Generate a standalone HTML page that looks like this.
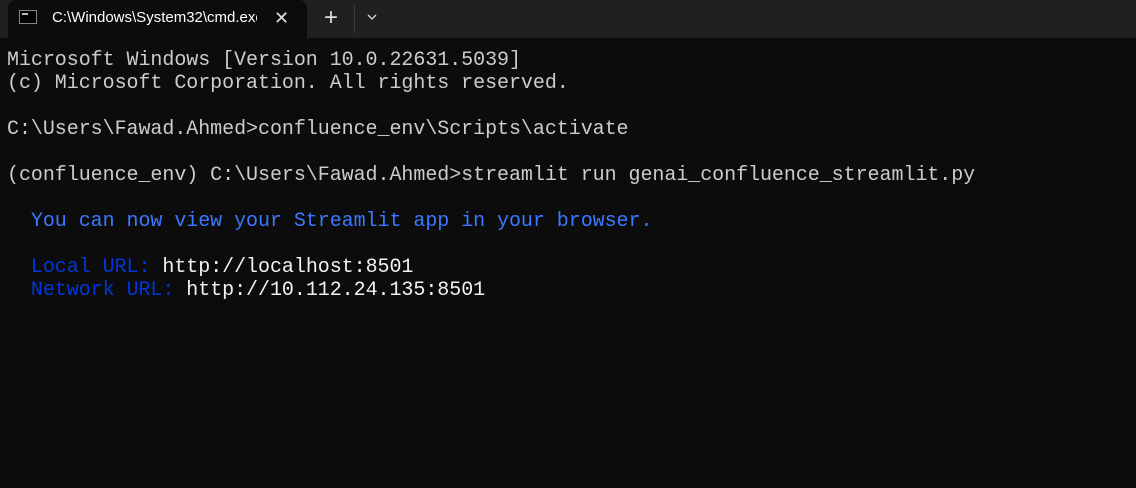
<!DOCTYPE html>
<html><head><style>
html,body{margin:0;padding:0;}
body{width:1136px;height:488px;background:#0c0c0c;overflow:hidden;position:relative;font-family:"Liberation Sans",sans-serif;}
.bar{position:absolute;left:0;top:0;width:1136px;height:38px;background:#202020;}
.tab{position:absolute;left:8px;top:0;width:299px;height:38px;background:#0c0c0c;border-radius:8px 8px 0 0;}
.icon{position:absolute;left:19px;top:10px;width:18px;height:14px;background:#000;border:1px solid #888;box-sizing:border-box;}
.icon:after{content:"";position:absolute;left:2px;top:2px;width:6px;height:2px;background:#bbb;}
.title{position:absolute;left:52px;top:9px;color:#fff;font-size:15px;width:205px;overflow:hidden;white-space:nowrap;}
.x{position:absolute;left:274px;top:8px;color:#ddd;font-size:18px;}
.plus{position:absolute;left:324px;top:4px;color:#ddd;font-size:24px;font-weight:300;}
.sep{position:absolute;left:354px;top:5px;width:1px;height:28px;background:#3a3a3a;}
.chev{position:absolute;left:366px;top:12px;}
pre{position:absolute;left:7px;top:49px;margin:0;font-family:"Liberation Mono",monospace;font-size:20px;line-height:23px;color:#cccccc;letter-spacing:-0.05px;}
.b{color:#3b78ff}.d{color:#0037da}.w{color:#f2f2f2}
</style></head><body>
<div class="bar"></div>
<div class="tab"></div>
<div class="icon"></div>
<div class="title">C:\Windows\System32\cmd.exe</div>
<div class="x">✕</div>
<div class="plus">+</div>
<div class="sep"></div>
<svg class="chev" width="12" height="10" viewBox="0 0 12 10"><path d="M2 3 L6 7 L10 3" stroke="#ddd" stroke-width="1.3" fill="none"/></svg>
<pre>Microsoft Windows [Version 10.0.22631.5039]
(c) Microsoft Corporation. All rights reserved.

C:\Users\Fawad.Ahmed>confluence_env\Scripts\activate

(confluence_env) C:\Users\Fawad.Ahmed>streamlit run genai_confluence_streamlit.py

  <span class="b">You can now view your Streamlit app in your browser.</span>

  <span class="d">Local URL:</span> <span class="w">http://localhost:8501</span>
  <span class="d">Network URL:</span> <span class="w">http://10.112.24.135:8501</span>
</pre>
</body></html>
